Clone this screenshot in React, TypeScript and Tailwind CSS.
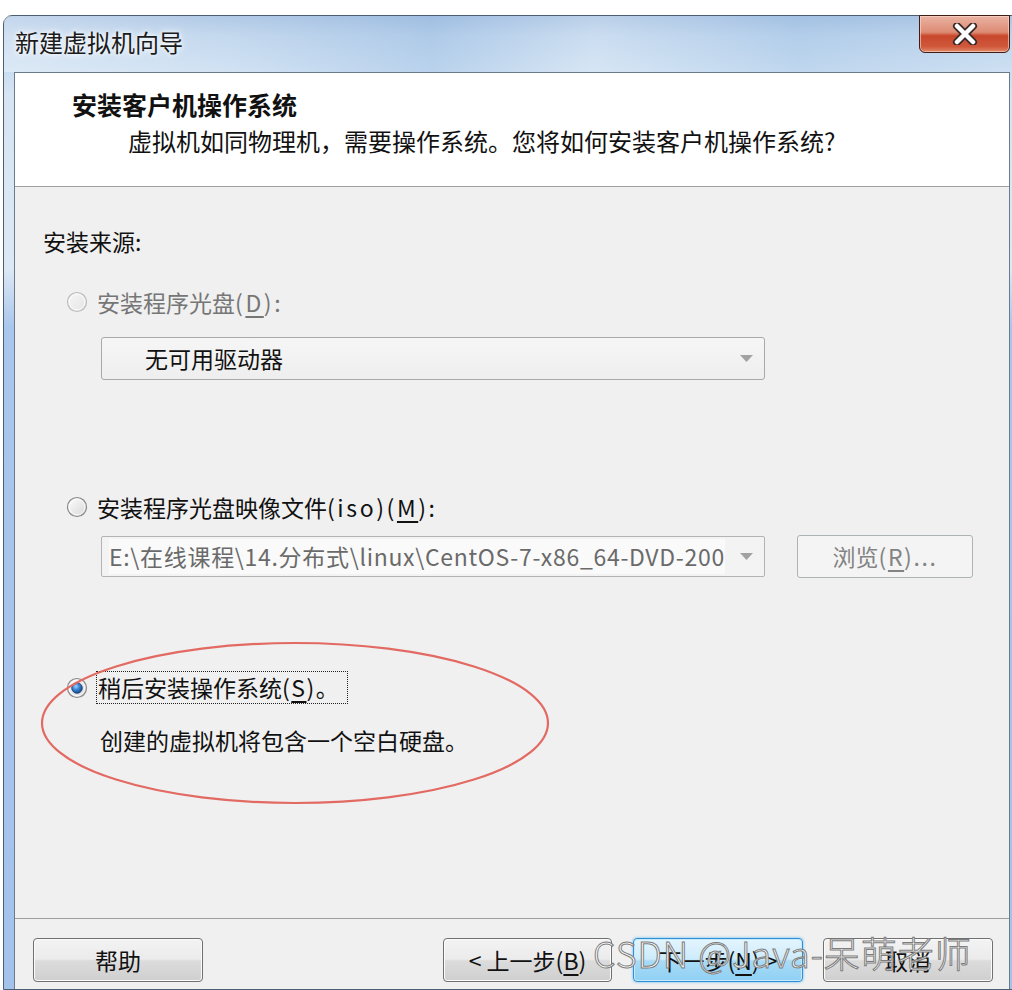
import React from "react";

const FONT = "font-['Noto_Sans_CJK_SC','Microsoft_YaHei',sans-serif]";

function Radio({ state }: { state: "disabled" | "off" | "on" }) {
  const stroke = state === "disabled" ? "#bdbdbd" : "#8a8a8a";
  const g1 = state === "disabled" ? "#f6f6f6" : "#ffffff";
  const g2 = state === "disabled" ? "#e4e4e4" : "#d6d6d6";
  return (
    <svg width="22" height="22" viewBox="0 0 22 22" className="shrink-0">
      <defs>
        <linearGradient id={`rg-${state}`} x1="0" y1="0" x2="1" y2="1">
          <stop offset="0" stopColor={g1} />
          <stop offset="1" stopColor={g2} />
        </linearGradient>
        <radialGradient id={`rd-${state}`} cx="0.4" cy="0.35" r="0.7">
          <stop offset="0" stopColor="#9fd3ff" />
          <stop offset="0.45" stopColor="#3a86d6" />
          <stop offset="1" stopColor="#12407f" />
        </radialGradient>
      </defs>
      <circle cx="11" cy="11" r="9.5" fill={`url(#rg-${state})`} stroke={stroke} strokeWidth="1.2" />
      <circle cx="11" cy="11" r="7.8" fill="none" stroke="#ffffff" strokeOpacity="0.7" strokeWidth="1" />
      {state === "on" && <circle cx="11" cy="11" r="5.3" fill={`url(#rd-${state})`} stroke="#1b3f73" strokeWidth="0.8" />}
    </svg>
  );
}

function Arrow() {
  return (
    <svg width="13" height="7" viewBox="0 0 13 7" className="shrink-0">
      <polygon points="0,0 13,0 6.5,7" fill="#a2a2a2" />
    </svg>
  );
}

function Btn({ children, primary, w }: { children: React.ReactNode; primary?: boolean; w: string }) {
  return (
    <div
      className={
        primary
          ? `${w} flex h-[44px] items-center justify-center rounded-[4px] border border-[#2d8fd6] bg-[linear-gradient(#e4f5fe_0%,#cdebfb_48%,#a9dbf7_52%,#8fd0f4_100%)] text-[23px] text-[#111] shadow-[inset_0_0_0_1px_#c6eafc,0_0_3px_#62b8ee]`
          : `${w} flex h-[44px] items-center justify-center rounded-[4px] border border-[#707070] bg-[linear-gradient(#f3f3f3_0%,#ebebeb_48%,#dcdcdc_52%,#cfcfcf_100%)] text-[23px] text-[#111] shadow-[inset_0_0_0_1px_#fbfbfb]`
      }
    >
      {children}
    </div>
  );
}

export default function App() {
  return (
    <div className={`relative h-[990px] w-[1012px] overflow-hidden bg-white ${FONT}`}>
      <div className="h-full pl-[3px] pt-[15px]">
        <div className="flex h-[975px] w-[1020px] flex-col rounded-tl-[9px] rounded-tr-[9px] border border-[#4d5d73] bg-[linear-gradient(180deg,#a4c0e1_0%,#b9d1eb_2%,#c6dbf0_5%,#d6e4f3_8%,#dce8f4_26%,#a9c6ec_32%,#a4c3eb_100%)]">
          {/* title bar */}
          <div className="relative flex h-[56px] items-start bg-[linear-gradient(90deg,rgba(255,255,255,0.35)_0%,rgba(255,255,255,0.15)_22%,rgba(150,185,225,0.3)_42%,rgba(255,255,255,0.25)_58%,rgba(160,195,230,0.25)_78%,rgba(255,255,255,0.1)_100%)]">
            <div className="pl-[11px] pt-[10px] text-[24px] leading-[32px] text-[#1b1b1b] [text-shadow:0_0_8px_#fff,0_0_4px_#fff]">
              新建虚拟机向导
            </div>
            <div className="ml-auto mr-[12px] -mt-[1px] flex h-[38px] w-[91px] items-center justify-center rounded-b-[6px] border border-[#3f1d16] bg-[linear-gradient(180deg,#eab3a3_0%,#dd8b74_45%,#c8472c_55%,#d0583b_85%,#e08a6a_100%)] shadow-[inset_0_0_0_1px_rgba(255,220,210,0.6)]">
              <svg width="26" height="22" viewBox="0 0 26 22">
                <path d="M5 3 L21 19 M21 3 L5 19" stroke="#3a2a2a" strokeWidth="8" strokeLinecap="round" />
                <path d="M5 3 L21 19 M21 3 L5 19" stroke="#ffffff" strokeWidth="4.5" strokeLinecap="round" />
              </svg>
            </div>
          </div>

          {/* client area */}
          <div className="ml-[10px] flex w-[996px] flex-1 flex-col border-l border-r border-t border-[#6b7a8d] bg-[#f0f0f0]">
            {/* header */}
            <div className="h-[114px] border-b border-[#a0a0a0] bg-white">
              <div className="pl-[57px] pt-[15px] text-[25px] font-bold leading-[32px] text-[#111]">安装客户机操作系统</div>
              <div className="mt-[5px] pl-[113px] text-[24px] leading-[32px] text-[#111]">
                虚拟机如同物理机，需要操作系统。您将如何安装客户机操作系统?
              </div>
            </div>

            {/* body */}
            <div className="flex h-[731px] flex-col pl-[28px] text-[23px] text-[#111]">
              <div className="mt-[37px] flex h-[34px] items-center">安装来源:</div>

              <div className="mt-[27px] flex h-[34px] items-center">
                <div className="ml-[23px]">
                  <Radio state="disabled" />
                </div>
                <span className="ml-[9px] text-[#767676]">
                  安装程序光盘
                  <span className="tracking-[2.6px]">
                    (<span className="underline underline-offset-[4px]">D</span>):
                  </span>
                </span>
              </div>

              <div className="ml-[58px] mt-[18px] flex h-[43px] w-[664px] items-center rounded-[3px] border border-[#a9a9a9] bg-[linear-gradient(#f6f6f6,#eeeeee)] pl-[43px] pr-[11px]">
                <span className="text-[#111]">无可用驱动器</span>
                <div className="ml-auto">
                  <Arrow />
                </div>
              </div>

              <div className="mt-[110px] flex h-[34px] items-center">
                <div className="ml-[23px]">
                  <Radio state="off" />
                </div>
                <span className="ml-[9px]">
                  安装程序光盘映像文件
                  <span className="tracking-[2.6px]">
                    (iso)(<span className="underline underline-offset-[4px]">M</span>):
                  </span>
                </span>
              </div>

              <div className="mt-[11px] flex h-[43px] items-center">
                <div className="ml-[58px] flex h-[41px] w-[664px] items-center overflow-hidden rounded-[2px] border border-[#b3b3b3] bg-[#f3f3f3] pl-[7px] pr-[11px]">
                  <span className="whitespace-nowrap bg-[#fafafa] tracking-[0.7px] text-[#6a6a6a]">
                    E:\在线课程\14.分布式\linux\CentOS-7-x86_64-DVD-200
                  </span>
                  <div className="ml-auto">
                    <Arrow />
                  </div>
                </div>
                <div className="ml-[32px] flex h-[43px] w-[176px] items-center justify-center rounded-[3px] border border-[#adb2b5] bg-[#f4f4f4] text-[#838383]">
                  浏览
                  <span className="tracking-[1.6px]">
                    (<span className="underline underline-offset-[4px]">R</span>)...
                  </span>
                </div>
              </div>

              <div className="mt-[93px] flex h-[33px] items-center">
                <div className="ml-[23px]">
                  <Radio state="on" />
                </div>
                <span className="ml-[8px] flex h-[33px] items-center border border-dotted border-[#222] pl-[1px] pr-[8px]">
                  稍后安装操作系统
                  <span className="tracking-[1.5px]">
                    (<span className="underline underline-offset-[4px]">S</span>)
                  </span>
                  。
                </span>
              </div>

              <div className="ml-[57px] mt-[19px] flex h-[34px] items-center">创建的虚拟机将包含一个空白硬盘。</div>
            </div>

            {/* footer */}
            <div className="flex flex-1 items-start border-t border-[#a0a0a0] pt-[19px]">
              <div className="ml-[18px]">
                <Btn w="w-[170px]">帮助</Btn>
              </div>
              <div className="ml-[240px]">
                <Btn w="w-[169px]">
                  &lt; 上一步(<span className="underline underline-offset-[4px]">B</span>)
                </Btn>
              </div>
              <div className="ml-[21px]">
                <Btn w="w-[170px]" primary>
                  下一步(<span className="underline underline-offset-[4px]">N</span>) &gt;
                </Btn>
              </div>
              <div className="ml-[20px]">
                <Btn w="w-[170px]">取消</Btn>
              </div>
            </div>
          </div>
        </div>
      </div>

      {/* red hand-drawn ellipse */}
      <svg className="pointer-events-none absolute left-0 top-0" width="1012" height="990" viewBox="0 0 1012 990">
        <ellipse cx="295" cy="723" rx="253" ry="80" fill="none" stroke="#e26a63" strokeWidth="2.2" />
      </svg>

      {/* watermark */}
      <div className="pointer-events-none absolute left-[593px] top-[928px] whitespace-nowrap text-[36px] font-light leading-[48px] tracking-[1px] text-white [-webkit-text-stroke:1px_#7d7d7d]">
        CSDN @Java-呆萌老师
      </div>
    </div>
  );
}
